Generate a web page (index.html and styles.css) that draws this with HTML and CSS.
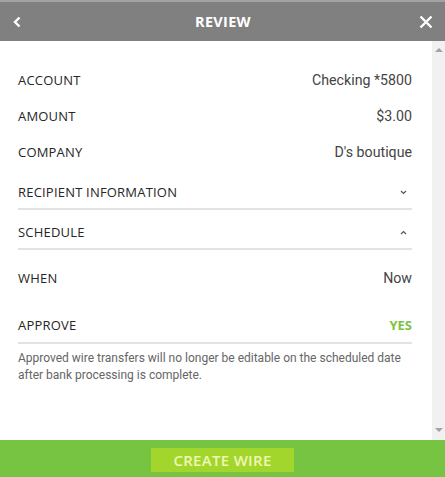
FILE: index.html
```html
<!DOCTYPE html>
<html lang="en">

<head>
    <meta charset="UTF-8">
    <meta name="viewport" content="width=device-width, initial-scale=1.0">
    <title>Review</title>
    <link rel="stylesheet" href="styles.css">
</head>

<body>
    <div class="panel">
        <div class="header">
            <span class="back">
                <svg width="8" height="12" viewBox="0 0 8 12"><path d="M6.5 1.5 L2 6 L6.5 10.5" fill="none" stroke="#fff" stroke-width="2.4"/></svg>
            </span>
            <h1 class="title">REVIEW</h1>
            <span class="close">
                <svg width="14" height="14" viewBox="0 0 14 14"><path d="M1.5 1.5 L12.5 12.5 M12.5 1.5 L1.5 12.5" fill="none" stroke="#fff" stroke-width="2.4"/></svg>
            </span>
        </div>

        <div class="body">
            <div class="content">
                <div class="row">
                    <span class="label">ACCOUNT</span>
                    <span class="value">Checking *5800</span>
                </div>
                <div class="row">
                    <span class="label">AMOUNT</span>
                    <span class="value">$3.00</span>
                </div>
                <div class="row">
                    <span class="label">COMPANY</span>
                    <span class="value">D's boutique</span>
                </div>

                <div class="section">
                    <span class="label">RECIPIENT INFORMATION</span>
                    <svg class="chev" width="7" height="5" viewBox="0 0 7 5"><path d="M1 1 L3.5 3.5 L6 1" fill="none" stroke="#555" stroke-width="1.2"/></svg>
                </div>
                <div class="section">
                    <span class="label">SCHEDULE</span>
                    <svg class="chev" width="7" height="5" viewBox="0 0 7 5"><path d="M1 4 L3.5 1.5 L6 4" fill="none" stroke="#555" stroke-width="1.2"/></svg>
                </div>

                <div class="row when">
                    <span class="label">WHEN</span>
                    <span class="value">Now</span>
                </div>

                <div class="section approve">
                    <span class="label">APPROVE</span>
                    <span class="yes">YES</span>
                </div>

                <p class="note">Approved wire transfers will no longer be editable on the scheduled date after bank processing is complete.</p>
            </div>

            <div class="scrollbar">
                <span class="arrow-up"></span>
                <span class="arrow-down"></span>
            </div>
        </div>

        <div class="footer">
            <button class="create">CREATE WIRE</button>
        </div>
    </div>
</body>

</html>
```

FILE: styles.css
```css
* {
    padding: 0;
    margin: 0;
    box-sizing: border-box;
}

body {
    background: #fff;
    font-family: "Open Sans", "Liberation Sans", sans-serif;
}

.panel {
    width: 445px;
    height: 477px;
    display: flex;
    flex-direction: column;
}

.header {
    height: 41px;
    border-top: 2px solid #a2a2a2;
    background-color: #808080;
    display: flex;
    align-items: center;
    justify-content: space-between;
    padding: 0 12px 0 13px;
}

.back {
    display: flex;
    width: 14px;
}

.close {
    display: flex;
}

.title {
    color: #fff;
    font-size: 14.5px;
    font-weight: 700;
    letter-spacing: 0.3px;
}

.body {
    flex: 1;
    display: flex;
}

.content {
    flex: 1;
    padding: 21px 20px 0 18px;
}

.scrollbar {
    width: 13px;
    background-color: #f1f1f1;
    display: flex;
    flex-direction: column;
    justify-content: space-between;
    align-items: center;
    padding: 7px 0 8px;
}

.arrow-up {
    border-bottom: 4px solid #a3a3a3;
    border-left: 4px solid transparent;
    border-right: 4px solid transparent;
}

.arrow-down {
    border-top: 4px solid #a3a3a3;
    border-left: 4px solid transparent;
    border-right: 4px solid transparent;
}

.row {
    height: 36px;
    display: flex;
    justify-content: space-between;
    align-items: flex-start;
    line-height: 16px;
    padding-top: 10px;
}

.label {
    color: #262626;
    font-size: 13px;
    font-weight: 500;
    letter-spacing: 0.2px;
    line-height: 16px;
}

.value {
    color: #444;
    font-family: Roboto, "Liberation Sans", sans-serif;
    font-size: 14.2px;
}

.section {
    display: flex;
    justify-content: space-between;
    align-items: center;
    line-height: 16px;
    padding: 14px 5px 8px 0;
    border-bottom: 2px solid #e2e2e2;
}

.chev {
    display: block;
}

.row.when {
    height: auto;
    padding: 20px 0 31px;
}

.section.approve {
    padding: 0 0 9px;
}

.yes {
    color: #7cc242;
    font-size: 13px;
    font-weight: 700;
}

.note {
    margin-top: 6px;
    color: #666;
    font-family: Roboto, "Liberation Sans", sans-serif;
    font-size: 12px;
    line-height: 17px;
}

.footer {
    height: 37px;
    background-color: #76c442;
    display: flex;
    justify-content: center;
    padding-top: 8px;
}

.create {
    width: 143px;
    height: 24px;
    border: none;
    background-color: #a2d62c;
    color: #eef7b4;
    font-family: "Open Sans", "Liberation Sans", sans-serif;
    font-size: 15px;
    font-weight: 600;
    letter-spacing: 0.3px;
}
```
